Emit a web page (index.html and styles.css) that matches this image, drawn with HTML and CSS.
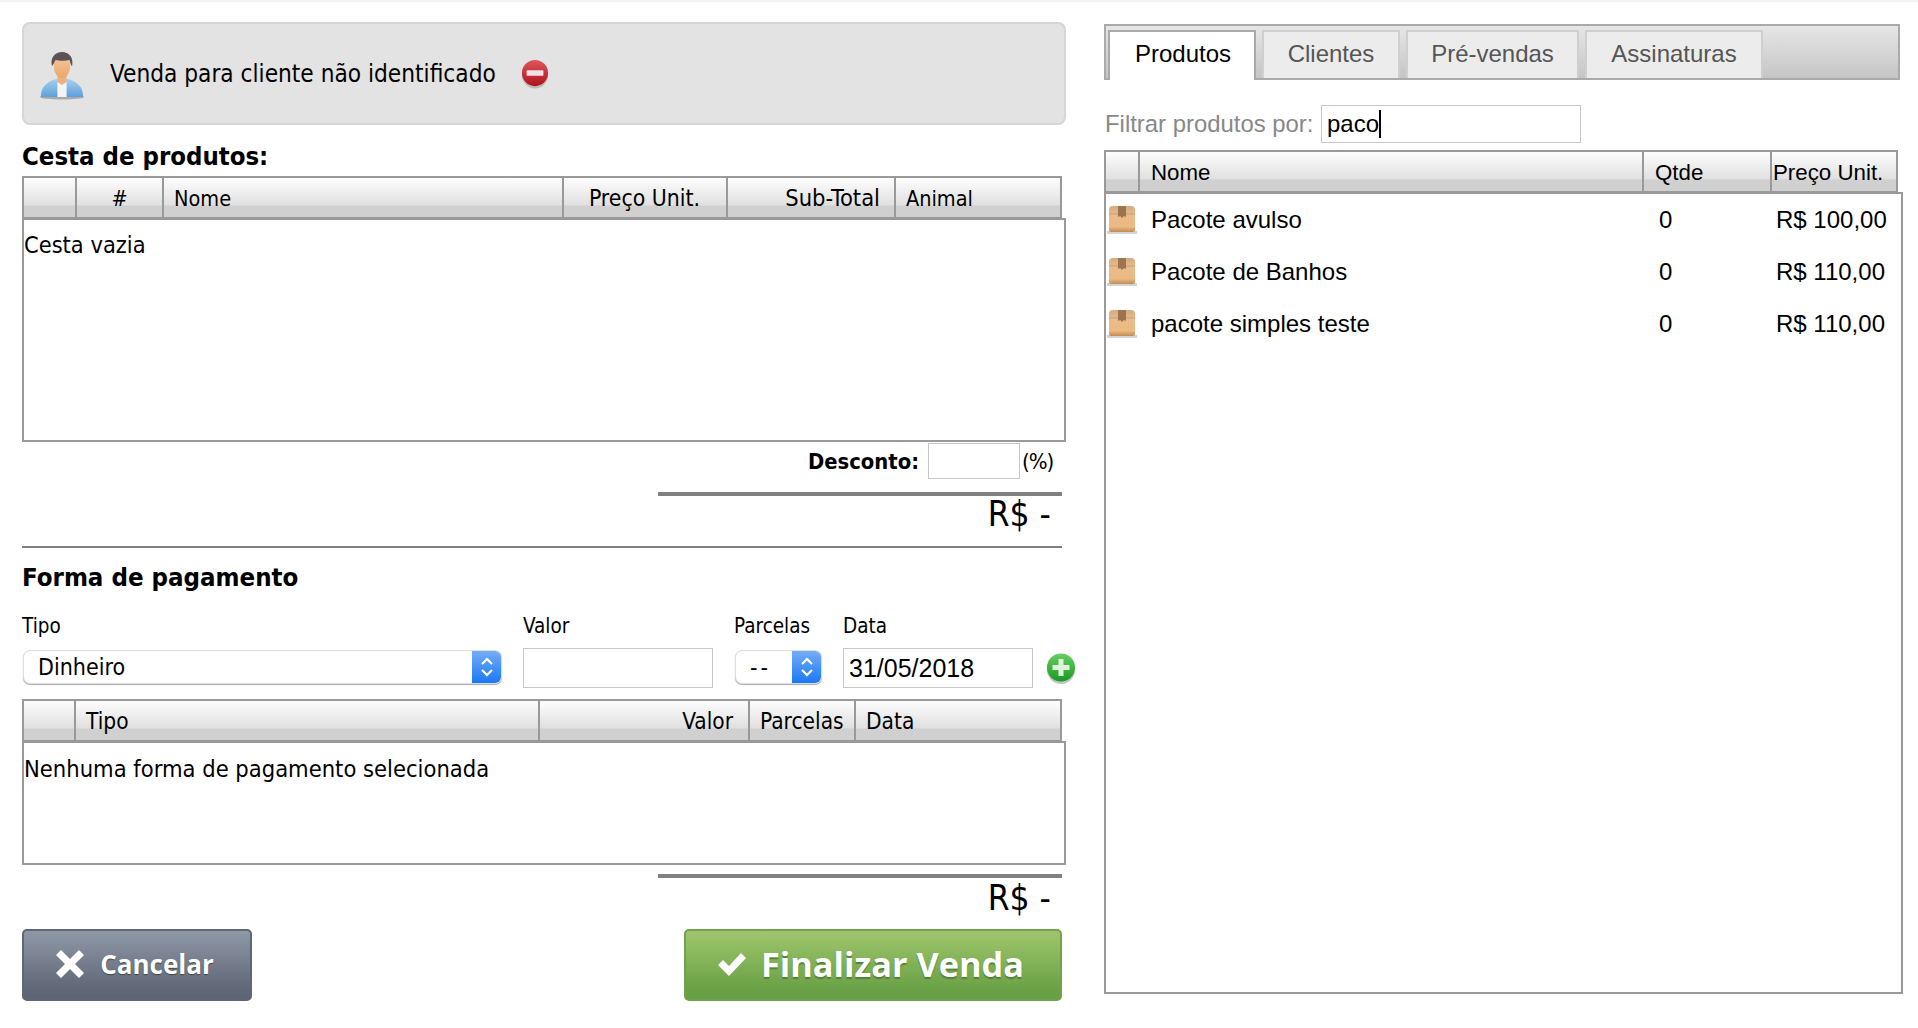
FILE: index.html
```html
<!DOCTYPE html>
<html lang="pt-BR">
<head>
<meta charset="utf-8">
<title>Venda</title>
<link rel="stylesheet" href="styles.css">
</head>
<body>
<svg class="defs" width="0" height="0" aria-hidden="true">
  <defs>
    <linearGradient id="boxg" x1="0" y1="0" x2="0" y2="1"><stop offset="0" stop-color="#d6ab7e"/><stop offset="0.35" stop-color="#e9bd8c"/><stop offset="0.8" stop-color="#ecb981"/><stop offset="1" stop-color="#c08a55"/></linearGradient>
    <symbol id="box" viewBox="0 0 30 30">
      <rect x="0" y="26" width="30" height="3" fill="#aaa" opacity=".5"/>
      <path d="M6 1h18a4 4 0 0 1 4 4v20a2 2 0 0 1-2 2H4a2 2 0 0 1-2-2V5a4 4 0 0 1 4-4z" fill="url(#boxg)"/>
      <path d="M2 8.500h26v1H2z" fill="#c99f74"/>
      <path d="M11 1h8v11l-2-1-2 2-2-2-2 1z" fill="#9c744f"/>
    </symbol>
  </defs>
</svg>
<div class="topline"></div>
<main class="page">
  <section class="left">
    <div class="client">
      <svg class="person" width="46" height="50" viewBox="0 0 50 50" preserveAspectRatio="none">
        <defs>
          <linearGradient id="coat" x1="0" y1="0" x2="0" y2="1"><stop offset="0" stop-color="#a9d0ee"/><stop offset="1" stop-color="#5d9fdb"/></linearGradient>
          <linearGradient id="skin" x1="0" y1="0" x2="0" y2="1"><stop offset="0" stop-color="#f7c99c"/><stop offset="1" stop-color="#e9a76c"/></linearGradient>
        </defs>
        <ellipse cx="25" cy="47" rx="24" ry="2.500" fill="#aaa"/>
        <path d="M2 47c0-10 6-15 16-18h14c10 3 16 8 16 18z" fill="url(#coat)"/>
        <rect x="20" y="32" width="10" height="15" fill="#f4f4f4"/>
        <path d="M20 24h10v8l-5 3-5-3z" fill="#eeb17a"/>
        <ellipse cx="25" cy="16" rx="9" ry="12" fill="url(#skin)"/>
        <path d="M14 16c-2-9 4-14 11-14s13 5 11 14c-2-1-2-5-3-6-4 1-11 1-15 0-1 1-2 5-4 6z" fill="#5b5254"/>
      </svg>
      <span class="client-name">Venda para cliente não identificado</span>
      <svg class="remove" width="28" height="30" viewBox="0 0 30 32">
        <defs><linearGradient id="red" x1="0" y1="0" x2="0" y2="1"><stop offset="0" stop-color="#e0555a"/><stop offset="1" stop-color="#ae1320"/></linearGradient></defs>
        <ellipse cx="15" cy="17" rx="14" ry="14.500" fill="#bbb"/>
        <circle cx="15" cy="15" r="14" fill="url(#red)"/>
        <rect x="6" y="12" width="18" height="6" rx="1" fill="#f1e3e3"/>
      </svg>
    </div>

    <h2 class="basket-title">Cesta de produtos:</h2>
    <div class="thead thead-basket">
      <div class="th"></div>
      <div class="th center">#</div>
      <div class="th">Nome</div>
      <div class="th ta-right th-price">Preço Unit.</div>
      <div class="th ta-right th-sub">Sub-Total</div>
      <div class="th">Animal</div>
    </div>
    <div class="tbody tbody-basket">Cesta vazia</div>

    <div class="discount">
      <strong class="discount-label">Desconto:</strong>
      <input class="field field-discount" type="text" aria-label="Desconto">
      <span class="pct">(%)</span>
    </div>
    <div class="total-rule"></div>
    <div class="total total-first">R$ -</div>
    <hr class="divider">

    <h2 class="pay-title">Forma de pagamento</h2>
    <div class="pay-form">
      <div class="col col-tipo">
        <label class="lbl">Tipo</label>
        <div class="select"><span class="select-text">Dinheiro</span><span class="select-arrow"><svg width="16" height="24" viewBox="0 0 16 24"><path d="M3 9l5-5 5 5M3 15l5 5 5-5" fill="none" stroke="#fff" stroke-width="2.200"/></svg></span></div>
      </div>
      <div class="col col-valor">
        <label class="lbl">Valor</label>
        <input class="field field-pay" type="text" aria-label="Valor">
      </div>
      <div class="col col-parc">
        <label class="lbl">Parcelas</label>
        <div class="select"><span class="select-text select-dash">--</span><span class="select-arrow"><svg width="16" height="24" viewBox="0 0 16 24"><path d="M3 9l5-5 5 5M3 15l5 5 5-5" fill="none" stroke="#fff" stroke-width="2.200"/></svg></span></div>
      </div>
      <div class="col col-data">
        <label class="lbl">Data</label>
        <input class="field field-pay field-date" type="text" value="31/05/2018" aria-label="Data">
      </div>
      <svg class="add" width="30" height="33" viewBox="0 0 30 33">
        <defs><linearGradient id="grn" x1="0" y1="0" x2="0" y2="1"><stop offset="0" stop-color="#67cf60"/><stop offset="1" stop-color="#189a22"/></linearGradient></defs>
        <ellipse cx="15" cy="18" rx="14" ry="14" fill="#c4c4c4"/>
        <circle cx="15" cy="15.500" r="14" fill="url(#grn)"/>
        <path d="M12.500 7h5v6h6v5h-6v6h-5v-6h-6v-5h6z" fill="#dff3dc"/>
      </svg>
    </div>
    <div class="thead thead-pay">
      <div class="th"></div>
      <div class="th">Tipo</div>
      <div class="th ta-right th-valor">Valor</div>
      <div class="th">Parcelas</div>
      <div class="th">Data</div>
    </div>
    <div class="tbody tbody-pay">Nenhuma forma de pagamento selecionada</div>
    <div class="total-rule total-rule-pay"></div>
    <div class="total total-second">R$ -</div>

    <div class="actions">
      <button class="btn btn-cancel" type="button">
        <svg width="30" height="30" viewBox="0 0 30 30"><path d="M6 1l9 9 9-9 5 5-9 9 9 9-5 5-9-9-9 9-5-5 9-9-9-9z" fill="#fff"/></svg>
        <span>Cancelar</span>
      </button>
      <button class="btn btn-finish" type="button">
        <svg width="30" height="26" viewBox="0 0 30 26"><path d="M1 14l5-5 6 6L24 2l5 5-17 18z" fill="#fff"/></svg>
        <span>Finalizar Venda</span>
      </button>
    </div>
  </section>

  <section class="side">
    <nav class="tabs">
      <a class="tab tab-active">Produtos</a>
      <a class="tab tab-c">Clientes</a>
      <a class="tab tab-p">Pré-vendas</a>
      <a class="tab tab-a">Assinaturas</a>
    </nav>
    <div class="filter">
      <label class="filter-label">Filtrar produtos por:</label>
      <div class="filter-box"><input class="field field-filter" type="text" value="paco" aria-label="Filtrar produtos por"><span class="caret"></span></div>
    </div>
    <div class="thead thead-prod">
      <div class="th"></div>
      <div class="th">Nome</div>
      <div class="th">Qtde</div>
      <div class="th th-tight">Preço Unit.</div>
    </div>
    <div class="tbody tbody-prod">
      <div class="row"><svg class="pkg" width="30" height="30"><use href="#box"/></svg><span class="row-name">Pacote avulso</span><span class="row-qty">0</span><span class="row-price">R$ 100,00</span></div>
      <div class="row"><svg class="pkg" width="30" height="30"><use href="#box"/></svg><span class="row-name">Pacote de Banhos</span><span class="row-qty">0</span><span class="row-price">R$ 110,00</span></div>
      <div class="row"><svg class="pkg" width="30" height="30"><use href="#box"/></svg><span class="row-name">pacote simples teste</span><span class="row-qty">0</span><span class="row-price">R$ 110,00</span></div>
    </div>
  </section>
</main>
</body>
</html>
```
FILE: styles.css
```css
* { box-sizing: border-box; }
html, body { margin: 0; padding: 0; background: #fff; }
body { width: 1918px; height: 1028px; overflow: hidden; color: #000; font-family: "DejaVu Sans Condensed", "DejaVu Sans", sans-serif; font-size: 22px; }
.defs { position: absolute; }
.topline { height: 2px; background: #f4f4f4; }
.page { display: flex; align-items: flex-start; gap: 38px; padding: 20px 0 0 22px; }
.left { width: 1044px; flex: none; }
.side { width: 799px; flex: none; padding-top: 2px; }

.client { height: 103px; display: flex; align-items: center; background: #e3e3e3; border: 2px solid #d6d6d6; border-radius: 8px; padding-left: 15px; }
.person { margin-right: 25px; margin-top: 2px; flex: none; }
.client-name { font-size: 24.200px; line-height: 1; margin-top: 2px; }
.remove { margin-left: 25px; margin-top: 1px; flex: none; }

h2 { margin: 0; font-weight: bold; }
.basket-title { font-size: 25.500px; line-height: 32px; margin-top: 15px; height: 36px; }
.pay-title { font-size: 25.600px; line-height: 32px; margin-top: 13px; height: 32px; }

.thead { display: grid; height: 43px; width: 1040px; border: 2px solid #999; background: linear-gradient(#fdfdfd 0, #e0e0e0 70%, #d0d0d0 71%, #d0d0d0 100%); position: relative; z-index: 1; }
.thead-basket { grid-template-columns: 53px 87px 400px 164px 168px 1fr; }
.thead-pay { grid-template-columns: 52px 464px 210px 106px 1fr; margin-top: 11px; }
.thead-prod { grid-template-columns: 34px 504px 128px 1fr; width: 794px; font-family: "Liberation Sans", Arial, sans-serif; margin-top: 7px; }
.th { border-right: 2px solid #999; padding: 0 10px; line-height: 41px; font-size: 21.500px; white-space: nowrap; }
.th:last-child { border-right: 0; }
.center { text-align: center; }
.ta-right { text-align: right; padding-right: 12px; }
.th-price { padding-right: 26px; font-size: 22.800px; }
.th-sub { padding-right: 14px; font-size: 23.500px; }
.th-valor { padding-right: 15px; font-size: 22.500px; }
.thead-pay .th { font-size: 22.500px; }
.th-tight { padding: 0 2px; }
.thead-prod .th { font-size: 22.300px; padding-left: 11px; }
.thead-prod .th-tight { padding-left: 1px; }

.tbody { width: 1044px; border: 2px solid #999; margin-top: -1px; background: #fff; }
.tbody-basket { height: 224px; padding: 11px 0 0 0; font-size: 23.400px; line-height: 28px; }
.tbody-pay { height: 124px; padding: 12px 0 0 0; font-size: 23.500px; line-height: 28px; }
.tbody-prod { width: 799px; height: 802px; padding-top: 0; font-family: "Liberation Sans", Arial, sans-serif; font-size: 24px; }

.field { border: 2px solid #c6c6c6; background: #fff; padding: 0 5px; margin: 0; outline: 0; border-radius: 0; font-family: "Liberation Sans", Arial, sans-serif; font-size: 25px; color: #000; }

.discount { display: flex; justify-content: flex-end; align-items: center; height: 36px; margin-top: 1px; padding-right: 14px; font-size: 22px; }
.discount-label { margin-right: 9px; font-size: 21.800px; }
.field-discount { width: 92px; height: 36px; border-width: 1px; }
.pct { margin-left: 2px; width: 30px; letter-spacing: -1px; white-space: nowrap; }
.total-rule { height: 4px; width: 404px; margin: 13px 0 0 636px; background: #808080; }
.total-rule-pay { margin-top: 9px; }
.total { width: 1040px; text-align: right; padding-right: 11px; font-size: 35px; line-height: 40px; }
.total-first { height: 50px; line-height: 36px; }
.total-second { height: 51px; }
.divider { width: 1040px; height: 2px; margin: 0; border: 0; background: #808080; }

.pay-form { display: flex; align-items: flex-end; margin-top: 20px; height: 75px; }
.col { display: flex; flex-direction: column; justify-content: space-between; height: 75px; flex: none; }
.col-tipo { width: 501px; }
.col-valor { width: 211px; }
.col-parc { width: 109px; }
.col-data { width: 201px; }
.lbl { font-size: 20.500px; line-height: 26px; display: block; }
.field-pay { height: 40px; width: 190px; border-width: 1.500px; }
.field-date { padding-left: 5px; font-size: 25px; }
.select { margin-left: 1px; margin-bottom: 4px; height: 34px; display: flex; justify-content: space-between; align-items: center; background: #fff; border-radius: 7px; border: 1px solid #ddd; box-shadow: 0 1px 1px #aaa; overflow: hidden; }
.col-tipo .select { width: 479px; }
.col-parc .select { width: 87px; }
.select-text { padding-left: 14px; font-size: 23px; white-space: nowrap; }
.select-dash { letter-spacing: 3px; }
.select-arrow { width: 29px; height: 34px; display: flex; align-items: center; justify-content: center; background: linear-gradient(#76aef7, #1877f5); }
.add { margin-bottom: 3px; margin-left: 2px; flex: none; }

.actions { display: flex; justify-content: space-between; width: 1040px; height: 72px; margin-top: 0; }
.btn { height: 72px; display: flex; align-items: center; justify-content: center; border-radius: 5px; color: #fff; padding: 0 5px 3px 0; font-family: "Open Sans", sans-serif; font-weight: bold; }
.btn-cancel { width: 230px; gap: 15px; font-size: 26px; background: linear-gradient(#8f98a6 0, #606877 85%, #5d6575 100%); border: 2px solid #5e6677; text-shadow: 0 1px 1px #444; }
.btn-finish { width: 378px; gap: 14px; font-size: 34.300px; background: linear-gradient(#9fc66d 0, #6aa146 85%, #67a044 100%); border: 2px solid #71a34c; text-shadow: 0 2px 1px #55803a; }

.tabs { display: flex; align-items: flex-end; height: 56px; width: 796px; padding-left: 2px; border: 2px solid #aaa; background: linear-gradient(#e6e6e6, #c5c5c5); font-family: "Liberation Sans", Arial, sans-serif; font-size: 24px; }
.tab { height: 48px; display: flex; align-items: center; justify-content: center; background: #ececec; border: 2px solid #cfcfcf; border-bottom: 0; color: #555; margin-right: 6px; padding-bottom: 3px; }
.tab-active { width: 148px; height: 50px; margin-bottom: -2px; background: #fff; border: 2px solid #aaa; border-bottom: 0; color: #000; margin-right: 6px; padding-bottom: 4px; padding-left: 2px; }
.tab-c { width: 138px; }
.tab-p { width: 173px; }
.tab-a { width: 178px; }

.filter { display: flex; align-items: center; height: 38px; margin-top: 25px; }
.filter-label { font-family: "Liberation Sans", Arial, sans-serif; font-size: 23.900px; color: #888; margin-left: 1px; width: 216px; white-space: nowrap; }
.filter-box { position: relative; }
.field-filter { width: 260px; height: 38px; border-width: 1.500px; display: block; font-size: 24px; padding-left: 5px; }
.caret { position: absolute; left: 58px; top: 5px; width: 2px; height: 28px; background: #000; }

.row { display: flex; align-items: center; height: 52px; position: relative; padding-left: 1px; }
.pkg { flex: none; }
.row-name { margin-left: 14px; width: 508px; }
.row-qty { width: 90px; }
.row-price { width: 108px; white-space: nowrap; text-align: right; margin-left: 27px; }
```
